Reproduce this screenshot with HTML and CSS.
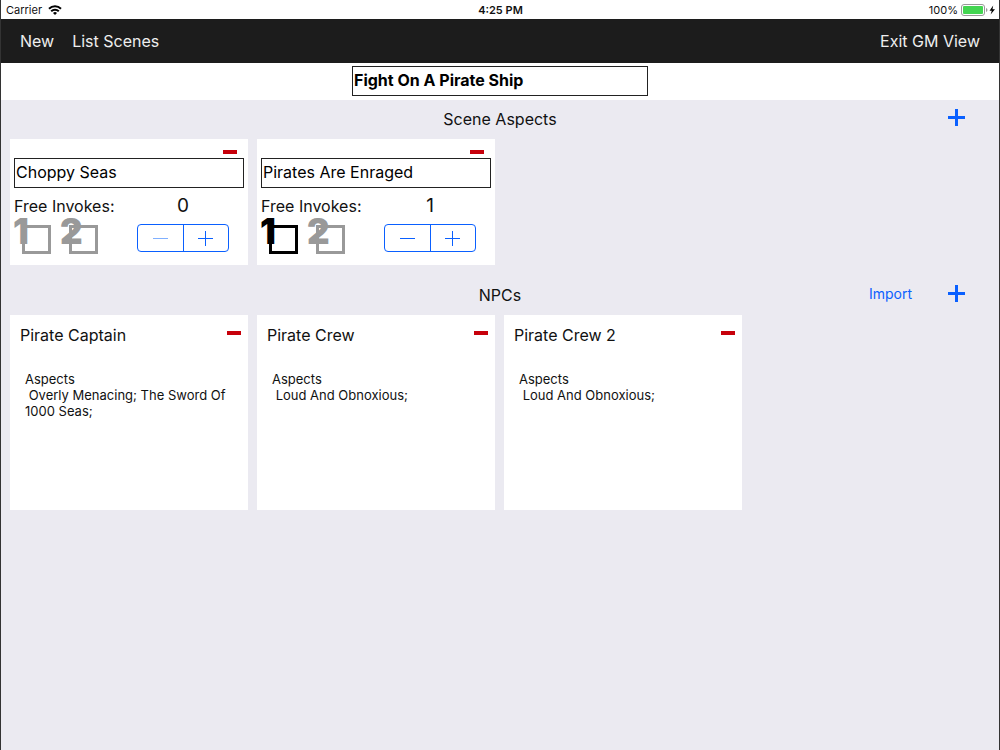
FILE: index.html
```
<!DOCTYPE html>
<html lang="en">
<head>
  <meta charset="UTF-8">
  <meta name="viewport" content="width=device-width, initial-scale=1">
  <title>GM View - Fight On A Pirate Ship</title>
  <link rel="stylesheet" href="styles.css">
</head>
<body>
  <div class="status">
    <div class="carrier">
      <span>Carrier</span>
      <svg width="14" height="10" viewBox="0 0 14 10" fill="none" stroke="#000" stroke-width="2">
        <path d="M1 3.8a8.6 8.6 0 0 1 12 0M3.2 6.2a5.4 5.4 0 0 1 7.6 0"/>
        <path d="M7 10L5 7.9a2.9 2.9 0 0 1 4 0z" fill="#000" stroke="none"/>
      </svg>
    </div>
    <div class="clock">4:25 PM</div>
    <div class="battery">
      <span>100%</span>
      <svg width="34" height="12" viewBox="0 0 34 12">
        <rect x="0.5" y="0.5" width="23" height="11" rx="2.5" fill="#fff" stroke="#999"/>
        <rect x="2" y="2" width="20" height="8" rx="1" fill="#43d551"/>
        <path d="M25 4v4q1.500-.5 1.500-2T25 4z" fill="#999"/>
        <path d="M32.200 1.500L28.500 6.700h2.300L29.600 10.500L34 5.200h-2.500z" fill="#000"/>
      </svg>
    </div>
  </div>

  <nav class="navbar">
    <a href="#new">New</a>
    <a href="#scenes">List Scenes</a>
    <a href="#exit" class="exit">Exit GM View</a>
  </nav>

  <header class="scene-title">
    <input type="text" value="Fight On A Pirate Ship" aria-label="Scene name">
  </header>

  <main>
    <section>
      <div class="section-head">
        <h2>Scene Aspects</h2>
        <div class="actions">
          <button class="add" aria-label="Add aspect"></button>
        </div>
      </div>
      <div class="cards">
        <article class="aspect">
          <button class="remove" aria-label="Remove aspect"></button>
          <input type="text" value="Choppy Seas" aria-label="Aspect">
          <div class="invokes">
            <div>
              <p class="label">Free Invokes:</p>
              <div class="boxes">
                <span class="box"><b>1</b></span>
                <span class="box"><b>2</b></span>
              </div>
            </div>
            <div class="counter">
              <p class="count">0</p>
              <div class="stepper">
                <button class="minus" aria-label="Decrease" disabled></button>
                <button class="plus" aria-label="Increase"></button>
              </div>
            </div>
          </div>
        </article>
        <article class="aspect">
          <button class="remove" aria-label="Remove aspect"></button>
          <input type="text" value="Pirates Are Enraged" aria-label="Aspect">
          <div class="invokes">
            <div>
              <p class="label">Free Invokes:</p>
              <div class="boxes">
                <span class="box on"><b>1</b></span>
                <span class="box"><b>2</b></span>
              </div>
            </div>
            <div class="counter">
              <p class="count">1</p>
              <div class="stepper">
                <button class="minus" aria-label="Decrease"></button>
                <button class="plus" aria-label="Increase"></button>
              </div>
            </div>
          </div>
        </article>
      </div>
    </section>

    <section class="npcs">
      <div class="section-head">
        <h2>NPCs</h2>
        <div class="actions">
          <button class="import">Import</button>
          <button class="add" aria-label="Add NPC"></button>
        </div>
      </div>
      <div class="cards">
        <article class="npc">
          <div class="npc-head">
            <h3>Pirate Captain</h3>
            <button class="remove" aria-label="Remove Pirate Captain"></button>
          </div>
          <p class="details">Aspects
 Overly Menacing; The Sword Of 1000 Seas;</p>
        </article>
        <article class="npc">
          <div class="npc-head">
            <h3>Pirate Crew</h3>
            <button class="remove" aria-label="Remove Pirate Crew"></button>
          </div>
          <p class="details">Aspects
 Loud And Obnoxious;</p>
        </article>
        <article class="npc">
          <div class="npc-head">
            <h3>Pirate Crew 2</h3>
            <button class="remove" aria-label="Remove Pirate Crew 2"></button>
          </div>
          <p class="details">Aspects
 Loud And Obnoxious;</p>
        </article>
      </div>
    </section>
  </main>
</body>
</html>
```
FILE: styles.css
```
* {
  box-sizing: border-box;
}
body {
  margin: 0;
  min-height: 100vh;
  font-family: Inter, "Liberation Sans", sans-serif;
  font-size: 16px;
  color: #111;
  background: #ebeaf1;
  border: solid #333;
  border-width: 0 1px;
}
h2, h3, p {
  margin: 0;
  font-size: 16px;
  font-weight: 400;
}
button {
  padding: 0;
  border: 0;
  background: none;
  font-family: inherit;
}
input[type="text"] {
  display: block;
  width: 100%;
  height: 30px;
  padding: 0 1px 2px;
  border: 1px solid #222;
  background: #fff;
  color: #000;
  font-family: inherit;
  font-size: 16px;
}

/* status bar */
.status {
  display: grid;
  grid-template-columns: 1fr auto 1fr;
  align-items: center;
  height: 19px;
  padding: 0 4px 0 5px;
  background: #fff;
  font-size: 11px;
}
.carrier, .battery {
  display: flex;
  align-items: center;
  gap: 6px;
}
.battery {
  justify-content: flex-end;
  gap: 3px;
}
.clock {
  font-weight: 600;
}

.navbar {
  display: flex;
  align-items: center;
  gap: 18px;
  height: 44px;
  padding: 0 19px;
  background: #1c1c1c;
}
.navbar a {
  color: #eee;
  text-decoration: none;
}
.navbar .exit {
  margin-left: auto;
}

.scene-title {
  display: flex;
  justify-content: center;
  padding: 3px 0 4px;
  background: #fff;
}
.scene-title input[type="text"] {
  width: 296px;
  font-weight: 700;
}

/* sections */
.section-head {
  display: grid;
  grid-template-columns: 1fr auto 1fr;
  align-items: center;
  height: 39px;
  padding: 0 33px 2px 0;
}
.section-head h2 {
  grid-column: 2;
  padding-left: 33px;
}
.npcs {
  padding-top: 11px;
}
.actions {
  display: flex;
  justify-content: flex-end;
  align-items: center;
  gap: 35px;
  padding-bottom: 3px;
}
.import {
  color: #0a60ff;
  font-size: 14px;
}
.add, .minus, .plus {
  color: #0a60ff;
  background-image: linear-gradient(currentColor, currentColor), linear-gradient(currentColor, currentColor);
  background-position: center;
  background-repeat: no-repeat;
}
.add {
  width: 19px;
  height: 19px;
  background-size: 17px 3px, 3px 17px;
}
.cards {
  display: grid;
  grid-template-columns: repeat(4, 1fr);
  gap: 9px;
  padding: 0 10px 0 9px;
}
.remove {
  display: block;
  width: 14px;
  height: 4px;
  background: #c7000b;
}

/* aspect cards */
.aspect {
  height: 126px;
  padding: 11px 4px 0;
  background: #fff;
}
.aspect .remove {
  margin: 0 7px 4px auto;
}
.invokes {
  display: flex;
  justify-content: space-between;
  padding: 8px 15px 0 0;
}
.label, .count {
  line-height: 20px;
}
.count {
  font-size: 19px;
  text-align: center;
}
.boxes {
  display: flex;
  gap: 18px;
  padding: 9px 0 0 8px;
}
.box {
  position: relative;
  width: 29px;
  height: 29px;
  border: 3px solid;
  color: #999;
}
.box.on {
  color: #000;
}
/* the number hangs over the top left corner of its box */
.box b {
  position: absolute;
  left: -12px;
  bottom: 7px;
  font-size: 35px;
  font-weight: 900;
  line-height: 26px;
}
.stepper {
  display: flex;
  width: 92px;
  height: 28px;
  margin-top: 8px;
  border: 1px solid #0a60ff;
  border-radius: 4px;
}
.stepper button {
  flex: 1;
}
.minus {
  background-size: 15px 1px;
}
.minus:disabled {
  color: #80b0ff;
}
.stepper .plus {
  border-left: 1px solid #0a60ff;
  background-size: 15px 1px, 1px 15px;
}

/* npc cards */
.npc {
  height: 195px;
  padding: 10px 7px 0 10px;
  background: #fff;
}
.npc-head {
  display: flex;
  justify-content: space-between;
  line-height: 20px;
}
.npc-head .remove {
  margin-top: 6px;
}
.details {
  padding: 26px 5px 0;
  font-size: 13px;
  line-height: 16px;
  white-space: pre-wrap;
}
```
